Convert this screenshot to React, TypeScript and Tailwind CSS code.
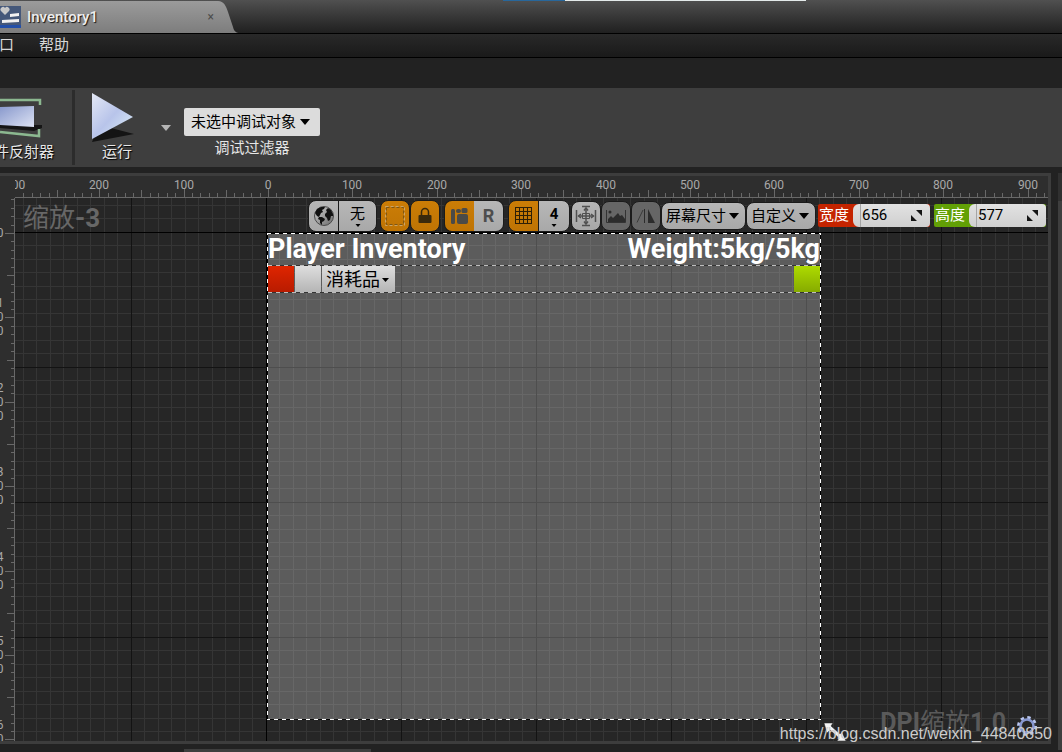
import type { ReactNode } from 'react';

const ORIGIN_X = 252;
const ORIGIN_Y = 35;
const CELL = 13.5;
const UNIT = 84.4;

function Caret({ className = '' }: { className?: string }) {
  return (
    <svg viewBox="0 0 10 6" className={`h-1.5 w-2.5 ${className}`} aria-hidden="true">
      <path d="M0 0h10L5 6z" fill="currentColor" />
    </svg>
  );
}

function range(from: number, to: number) {
  return Array.from({ length: to - from + 1 }, (_, i) => from + i);
}

function CanvasGrid() {
  const color = (i: number) => (i === 0 ? '#000000' : i % 10 === 0 ? '#131313' : '#353535');
  // minor lines first, so that the dark ones stay unbroken
  const order = (a: number, b: number) => Number(a % 10 === 0) - Number(b % 10 === 0);
  return (
    <svg className="absolute inset-0 h-full w-full" shapeRendering="crispEdges" aria-hidden="true">
      {range(-18, 160).sort(order).map((i) => (
        <g key={i} fill={color(i)}>
          <rect x={Math.floor(ORIGIN_X - 1 + i * CELL)} y="0" width="1" height="100%" />
          {i >= -2 && <rect x="0" y={Math.floor(ORIGIN_Y - 1 + i * CELL)} width="100%" height="1" />}
        </g>
      ))}
    </svg>
  );
}

function TopRuler() {
  return (
    <svg className="h-[22px] min-w-0 flex-1 font-[family-name:Roboto,sans-serif] text-xs" aria-label="Horizontal ruler">
      <rect x="0" y="21" width="100%" height="1" fill="#686868" />
      {range(-29, 160).map((i) => {
        const h = i % 10 === 0 ? 9 : i % 5 === 0 ? 7 : 4;
        return (
          <rect key={i} x={Math.round(ORIGIN_X + 1 + (i * UNIT) / 10)} y={21 - h} width="1" height={h} fill="#686868" />
        );
      })}
      {range(-3, 16).map((i) => (
        <text key={i} x={Math.round(ORIGIN_X + 1 + i * UNIT)} y="13" textAnchor="middle" fill="#a8a8a8">
          {Math.abs(i * 100)}
        </text>
      ))}
    </svg>
  );
}

function SideRuler() {
  return (
    <svg className="w-[15px] shrink-0 font-[family-name:Roboto,sans-serif] text-xs" aria-label="Vertical ruler">
      <rect x="14" y="0" width="1" height="100%" fill="#686868" />
      {range(-4, 80).map((i) => {
        const w = i % 10 === 0 ? 9 : i % 5 === 0 ? 7 : 3;
        return (
          <rect key={i} x={14 - w} y={Math.round(ORIGIN_Y + (i * UNIT) / 10)} width={w} height="1" fill="#686868" />
        );
      })}
      {range(0, 8).map((i) => {
        const digits = String(i * 100).split('');
        const top = ORIGIN_Y + i * UNIT + 4 - (digits.length - 1) * 7;
        return digits.map((d, n) => (
          <text key={`${i}-${n}`} x="0" y={Math.round(top + n * 14)} textAnchor="middle" fill="#a8a8a8">
            {d}
          </text>
        ));
      })}
    </svg>
  );
}

function GlobeIcon() {
  return (
    <svg viewBox="0 0 22 22" className="size-[22px]">
      <defs>
        <linearGradient id="globe" x1="0" y1="0" x2="1" y2="1">
          <stop offset="0" stopColor="#cfcfcf" />
          <stop offset="1" stopColor="#6a6a6a" />
        </linearGradient>
      </defs>
      <circle cx="11" cy="11" r="9.5" fill="url(#globe)" stroke="#4a4a4a" />
      <path d="M2 8l2-4 4-2 4 0-1 2-2 1 1 2-2 1-1 2-1 2-2-1z" fill="#111" />
      <path d="M6 12l3 0 3 2-1 2-2 1 0 3-2-2 0-3-2-1z" fill="#111" />
      <path d="M13 5l2-2 3 2 2 4 0 2-2 0-1 4-2 1-1-3-2-2 0-2 2-2z" fill="#111" />
    </svg>
  );
}

function OutlineIcon() {
  return (
    <svg viewBox="0 0 24 24" className="size-6" fill="none">
      <rect x="3.5" y="3.5" width="17" height="17" stroke="#7d5716" strokeDasharray="3 2" />
      <rect x="2.5" y="2.5" width="19" height="19" stroke="#c9a468" strokeDasharray="3 2" />
    </svg>
  );
}

function LockIcon() {
  return (
    <svg viewBox="0 0 16 18" className="h-[18px] w-4">
      <path d="M4.500 9V5a3.500 3.500 0 0 1 7 0v4" fill="none" stroke="#3b2a0c" strokeWidth="1.5" />
      <rect x="1.5" y="8" width="13" height="8" rx="1" fill="#3b2a0c" />
    </svg>
  );
}

function LocalizeIcon() {
  return (
    <svg viewBox="0 0 20 18" className="h-[18px] w-5" fill="#4a4a48">
      <rect x="1" y="2" width="4" height="15" rx="1.5" />
      <rect x="6" y="2" width="5" height="4" rx="2" />
      <rect x="11.500" y="1" width="6" height="5" rx="1.500" />
      <rect x="7" y="7" width="11" height="10" rx="2" />
    </svg>
  );
}

function GridIcon() {
  return (
    <svg viewBox="0 0 17 17" className="size-[17px]" shapeRendering="crispEdges" fill="#2e1f06">
      {[0, 4, 8, 12, 16].map((p) => (
        <g key={p}>
          <rect x={p} y="0" width="1" height="17" />
          <rect x="0" y={p} width="17" height="1" />
        </g>
      ))}
      <path d="M0 0h17v17H0z" fill="none" stroke="#2e1f06" strokeWidth="2" />
    </svg>
  );
}

function TransformIcon() {
  return (
    <svg viewBox="0 0 22 22" className="size-[22px]" fill="none" stroke="#505050" strokeWidth="1.5">
      <path d="M1.500 5v12M20.500 5v12M7 1.500h8M7 20.500h8M11 3v16M3.500 11h15" />
      <path d="M9 5.500l2-2.500 2 2.500M9 16.500l2 2.500 2-2.500M6 9l-2.500 2L6 13M16 9l2.500 2L16 13" />
      <path d="M7.500 8.500h7v5h-7z" strokeWidth="1" />
    </svg>
  );
}

function PictureIcon() {
  return (
    <svg viewBox="0 0 22 18" className="h-[18px] w-[22px]">
      <path d="M1.500 3v12.500h19V3" fill="none" stroke="#333" />
      <path d="M3 15v-3l3-3 2 2 5-5 2 3 2-1 3 4v3z" fill="#2c2c2c" />
      <circle cx="5" cy="5" r="1.500" fill="#2c2c2c" />
    </svg>
  );
}

function FlipIcon() {
  return (
    <svg viewBox="0 0 20 18" className="h-[18px] w-5">
      <path d="M7 3L1 15.500" stroke="#3a3a3a" fill="none" />
      <path d="M8.500 2v14" stroke="#2c2c2c" />
      <path d="M12 2l7 14h-7z" fill="#2c2c2c" />
    </svg>
  );
}

const tool = 'flex items-center justify-center border border-[#1b1b1b]';
const gray = 'bg-linear-to-b from-[#b7b7b7] to-[#a8a8a8]';
const orange = 'bg-linear-to-b from-[#cb7d06] to-[#bf7404]';

function ToolButton({ label, className, children }: { label: string; className: string; children: ReactNode }) {
  return (
    <button type="button" aria-label={label} className={`${tool} ${className}`}>
      {children}
    </button>
  );
}

function PillSelect({ label, value }: { label: string; value: string }) {
  return (
    <div className={`relative rounded-lg border border-[#1b1b1b] text-black ${gray}`}>
      <select aria-label={label} className="block h-[26px] appearance-none bg-transparent pl-1 pr-[18px] text-[15px] leading-[26px]">
        <option>{value}</option>
      </select>
      <Caret className="pointer-events-none absolute right-1.5 top-2.5" />
    </div>
  );
}

function SizeField({ id, label, value, color }: { id: string; label: string; value: string; color: string }) {
  return (
    <div className={`flex h-[23px] w-28 items-stretch rounded-xs text-[15px] ${color}`}>
      <label htmlFor={id} className="w-[35px] shrink-0 pl-px leading-[22px] text-white">
        {label}
      </label>
      <div className="flex min-w-0 flex-1 items-center rounded-l-md rounded-r-sm bg-linear-to-b from-[#e2e2e2] to-[#cfcfcf] pr-2">
        <span className="h-full w-2 shrink-0 border-r border-[#a5a5a5]" />
        <input id={id} defaultValue={value} className="min-w-0 flex-1 bg-transparent pl-px text-[15px] text-black outline-none" />
        <svg viewBox="0 0 11 11" className="size-[11px] shrink-0" aria-hidden="true">
          <path d="M5 0h6v6zM0 5l6 6H0z" fill="#151515" />
        </svg>
      </div>
    </div>
  );
}

function CanvasToolbar() {
  return (
    <div className="relative flex h-[35px] items-center justify-end pr-0.5">
      <div className="mr-[3px] flex">
        <ToolButton label="本地化" className={`h-8 w-[31px] rounded-l-lg ${gray}`}>
          <GlobeIcon />
        </ToolButton>
        <ToolButton label="语言" className={`-ml-px h-8 w-[39px] flex-col rounded-r-lg text-[15px] leading-5 text-black ${gray}`}>
          无
          <Caret className="h-[3px] w-1.5" />
        </ToolButton>
      </div>
      <ToolButton label="显示轮廓" className={`h-8 w-[30px] rounded-lg ${orange}`}>
        <OutlineIcon />
      </ToolButton>
      <ToolButton label="锁定" className={`mr-1 h-8 w-[30px] rounded-lg ${orange}`}>
        <LockIcon />
      </ToolButton>
      <div className="mr-1 flex">
        <ToolButton label="布局变换" className={`h-8 w-[30px] rounded-l-lg border-r-0 ${orange}`}>
          <LocalizeIcon />
        </ToolButton>
        <ToolButton label="渲染变换" className={`h-8 w-[30px] rounded-r-lg border-l-0 text-lg font-bold text-[#4d4d4d] ${gray}`}>
          R
        </ToolButton>
      </div>
      <div className="mr-px flex">
        <ToolButton label="网格对齐" className={`h-8 w-[31px] rounded-l-lg ${orange}`}>
          <GridIcon />
        </ToolButton>
        <ToolButton label="网格大小" className={`-ml-px h-8 w-8 flex-col rounded-r-lg text-[15px] font-bold leading-5 text-black ${gray}`}>
          4
          <Caret className="h-[3px] w-1.5" />
        </ToolButton>
      </div>
      <ToolButton label="缩放以适应" className={`h-[30px] w-[30px] rounded-lg ${gray}`}>
        <TransformIcon />
      </ToolButton>
      <ToolButton label="背景图片" className="h-[30px] w-[30px] rounded-lg bg-[#666666]">
        <PictureIcon />
      </ToolButton>
      <ToolButton label="翻转" className="h-[30px] w-[30px] rounded-lg bg-[#666666]">
        <FlipIcon />
      </ToolButton>
      <PillSelect label="屏幕大小" value="屏幕尺寸" />
      <PillSelect label="尺寸模式" value="自定义" />
      <div className="ml-0.5 flex gap-1">
        <SizeField id="width" label="宽度" value="656" color="bg-[#c42400]" />
        <SizeField id="height" label="高度" value="577" color="bg-[#62a006]" />
      </div>
    </div>
  );
}

function DashedRule() {
  return <div className="h-px bg-[repeating-linear-gradient(90deg,#bdbdbd_0_4px,#333333_4px_8px)]" />;
}

function Artboard() {
  return (
    <div className="absolute left-[252px] top-[35px] h-[487px] w-[554px] bg-white/25 p-px">
      <div className="flex h-[31px] items-center justify-between text-[27px] font-bold leading-[31px] text-white">
        <h1>Player Inventory</h1>
        <p>Weight:5kg/5kg</p>
      </div>
      <DashedRule />
      <div className="flex h-[26px] items-stretch gap-px">
        <button type="button" aria-label="红色" className="w-[26px] bg-linear-to-b from-[#df2500] to-[#b81b00]" />
        <button type="button" aria-label="白色" className="w-[26px] bg-linear-to-b from-[#dedede] to-[#b5b5b5]" />
        <div className="relative bg-linear-to-b from-[#dedede] to-[#b5b5b5] text-black">
          <select aria-label="分类" className="block h-[26px] appearance-none bg-transparent pl-1 pr-[15px] pt-0.5 text-lg leading-6">
            <option>消耗品</option>
          </select>
          <Caret className="pointer-events-none absolute right-1.5 top-[11px] h-1 w-[7px]" />
        </div>
        <button type="button" aria-label="绿色" className="ml-auto w-[26px] bg-linear-to-b from-[#aedb00] to-[#86ab00]" />
      </div>
      <DashedRule />
      <svg className="pointer-events-none absolute inset-0 h-full w-full" fill="none" strokeWidth="2" shapeRendering="crispEdges" aria-hidden="true">
        <rect width="100%" height="100%" stroke="#000" />
        <rect width="100%" height="100%" stroke="#fff" strokeDasharray="4 4" />
      </svg>
    </div>
  );
}

function Designer() {
  return (
    <section className="flex min-h-0 flex-1 flex-col border-y-[3px] border-r-[3px] border-[#3d3d3d] bg-[#2e2e2e]">
      <div className="flex">
        <div className="w-[15px] shrink-0" />
        <TopRuler />
      </div>
      <div className="flex min-h-[543px] flex-1">
        <SideRuler />
        <div className="relative min-w-0 flex-1 overflow-hidden bg-[#262626]">
          <CanvasGrid />
          <CanvasToolbar />
          <p className="absolute left-2 top-0.5 text-[26px] font-bold leading-9 text-[#676767]">
            <span className="font-normal">缩放</span>-3
          </p>
          <Artboard />
          <p className="absolute bottom-0 right-[42px] text-[25px] font-bold leading-9 text-[#5a5a5a]">
            DPI<span className="font-normal">缩放</span>1.0
          </p>
          <button type="button" aria-label="DPI 设置" className="absolute bottom-1 right-2.5">
            <svg viewBox="0 0 22 22" className="size-[22px]" fill="none">
              <circle cx="11" cy="11" r="8.500" stroke="#b9c6ee" strokeWidth="3" strokeDasharray="3.340 3.340" />
              <circle cx="11" cy="11" r="6.500" stroke="#8797d0" strokeWidth="2.500" />
            </svg>
          </button>
          <svg viewBox="0 0 24 20" className="absolute left-[808px] top-[524px] h-5 w-6" fill="#f4f4f4" aria-hidden="true">
            <path d="M1 1h9L8 4l9 8 2-2 4 9h-9l2-3-9-8-3 3z" stroke="#222" strokeWidth=".5" />
          </svg>
        </div>
      </div>
    </section>
  );
}

function TitleBar() {
  return (
    <header className="border-b border-black bg-linear-to-b from-[#505050] to-[#202020]">
      <div className="flex h-px">
        <span className="w-[503px]" />
        <span className="w-[62px] bg-[#28679b]" />
        <span className="w-[241px] bg-[#e4eaea]" />
      </div>
      <div className="flex h-8">
        <div className="flex w-[218px] items-center bg-linear-to-b from-[#9b9b9b] to-[#7d7d7d]">
          <svg viewBox="0 0 21 22" className="h-[22px] w-[21px]" aria-hidden="true">
            <rect width="21" height="22" fill="#45587a" />
            <rect y="19" width="21" height="3" fill="#2450a8" />
            <path d="M5 9L1 5a2 2 0 0 1 4-3 2 2 0 0 1 4 3z" fill="#c9c9c9" />
            <path d="M10 8l9-1v3l-9 1zM2 14l17-1v3l-17 1z" fill="#f2f2f2" />
          </svg>
          <span className="ml-1.5 text-[15px] font-medium text-[#eeeeee] [text-shadow:1px_1px_1px_#111]">Inventory1</span>
          <button type="button" aria-label="关闭" className="ml-auto mr-1 text-xs text-[#4c4c4c]">
            ×
          </button>
        </div>
        <svg viewBox="0 0 22 32" className="h-8 w-[22px]" aria-hidden="true">
          <defs>
            <linearGradient id="tab" x1="0" y1="0" x2="0" y2="1">
              <stop offset="0" stopColor="#9b9b9b" />
              <stop offset="1" stopColor="#7d7d7d" />
            </linearGradient>
          </defs>
          <path d="M0 0c6 0 8 5 10 11l5 15c1 4 3 6 7 6H0z" fill="url(#tab)" />
        </svg>
      </div>
    </header>
  );
}

function Toolbar() {
  return (
    <div className="flex h-[79px] bg-[#3e3e3e] text-[15px] leading-5 text-[#e6e6e6]">
      <button type="button" className="-ml-1.5 flex w-[60px] flex-col items-start pt-2 [text-shadow:1px_1px_1px_#000]">
        <svg viewBox="0 0 42 46" className="ml-1.5 h-[46px] w-[42px]" aria-hidden="true">
          <defs>
            <linearGradient id="screen" x1="0" y1="0" x2="1" y2="1">
              <stop offset="0" stopColor="#8898cc" />
              <stop offset="1" stopColor="#dde3f4" />
            </linearGradient>
          </defs>
          <path d="M0 29h42v3l-8 3L0 32z" fill="#151515" />
          <path d="M0 4h40v5M0 36l39 4v-7" fill="none" stroke="#8cb890" strokeWidth="2.5" />
          <path d="M0 11l34-1v21L0 29z" fill="url(#screen)" />
        </svg>
        <span className="whitespace-nowrap">件反射器</span>
      </button>
      <div className="ml-[18px] h-[75px] w-[3px] self-center bg-[#2c2c2c]" />
      <button type="button" className="ml-[15px] flex w-[54px] flex-col items-center pt-1 [text-shadow:1px_1px_1px_#000]">
        <svg viewBox="0 0 52 50" className="h-[50px] w-[52px]" aria-hidden="true">
          <defs>
            <linearGradient id="play" x1="0" y1="0" x2="1" y2="1">
              <stop offset="0" stopColor="#e4e8f5" />
              <stop offset=".5" stopColor="#b8c4ea" />
              <stop offset="1" stopColor="#dff2f8" />
            </linearGradient>
          </defs>
          <path d="M1 50l2-5 17-9 23 6z" fill="#141414" />
          <path d="M1 1l41 24L1 47z" fill="url(#play)" />
        </svg>
        <span>运行</span>
      </button>
      <button type="button" aria-label="运行选项" className="ml-[17px] w-2.5 text-[#b5b5b5]">
        <Caret />
      </button>
      <div className="ml-[13px] flex flex-col items-center pt-5">
        <div className="relative rounded-xs bg-[#dcdcdc] text-black">
          <select id="debug-filter" className="block h-7 appearance-none bg-transparent pl-[7px] pr-[23px] text-[15px] leading-7">
            <option>未选中调试对象</option>
          </select>
          <Caret className="pointer-events-none absolute right-2.5 top-[11px]" />
        </div>
        <label htmlFor="debug-filter" className="mt-0.5">
          调试过滤器
        </label>
      </div>
    </div>
  );
}

export default function App() {
  return (
    <div className="relative flex min-h-screen flex-col overflow-hidden bg-[#222222] font-[family-name:Roboto,'Noto_Sans_CJK_SC',sans-serif]">
      <TitleBar />
      <nav className="flex h-6 items-center gap-[25px] border-b border-black bg-linear-to-b from-[#292929] to-[#1a1a1a] pb-0.5 text-[15px] leading-5 text-[#d8d8d8]">
        <button type="button" className="-ml-px">口</button>
        <button type="button">帮助</button>
      </nav>
      <main className="flex flex-1 flex-col pt-[30px]">
        <Toolbar />
        <div className="mt-1.5 flex flex-1 items-stretch gap-[7px]">
          <Designer />
          <div className="-mb-1.5 w-1 border-t-[28px] border-[#303030] bg-[#3e3e3e]" />
        </div>
      </main>
      <div className="ml-[184px] mt-[5px] h-[3px] w-[187px] bg-[#3e3e3e]" />
      <a
        href="https://blog.csdn.net/weixin_44840850"
        className="absolute bottom-1.5 right-2.5 font-[family-name:'Liberation_Sans',sans-serif] text-base leading-6 text-[#cccccc]"
      >
        https://blog.csdn.net/weixin_44840850
      </a>
    </div>
  );
}
